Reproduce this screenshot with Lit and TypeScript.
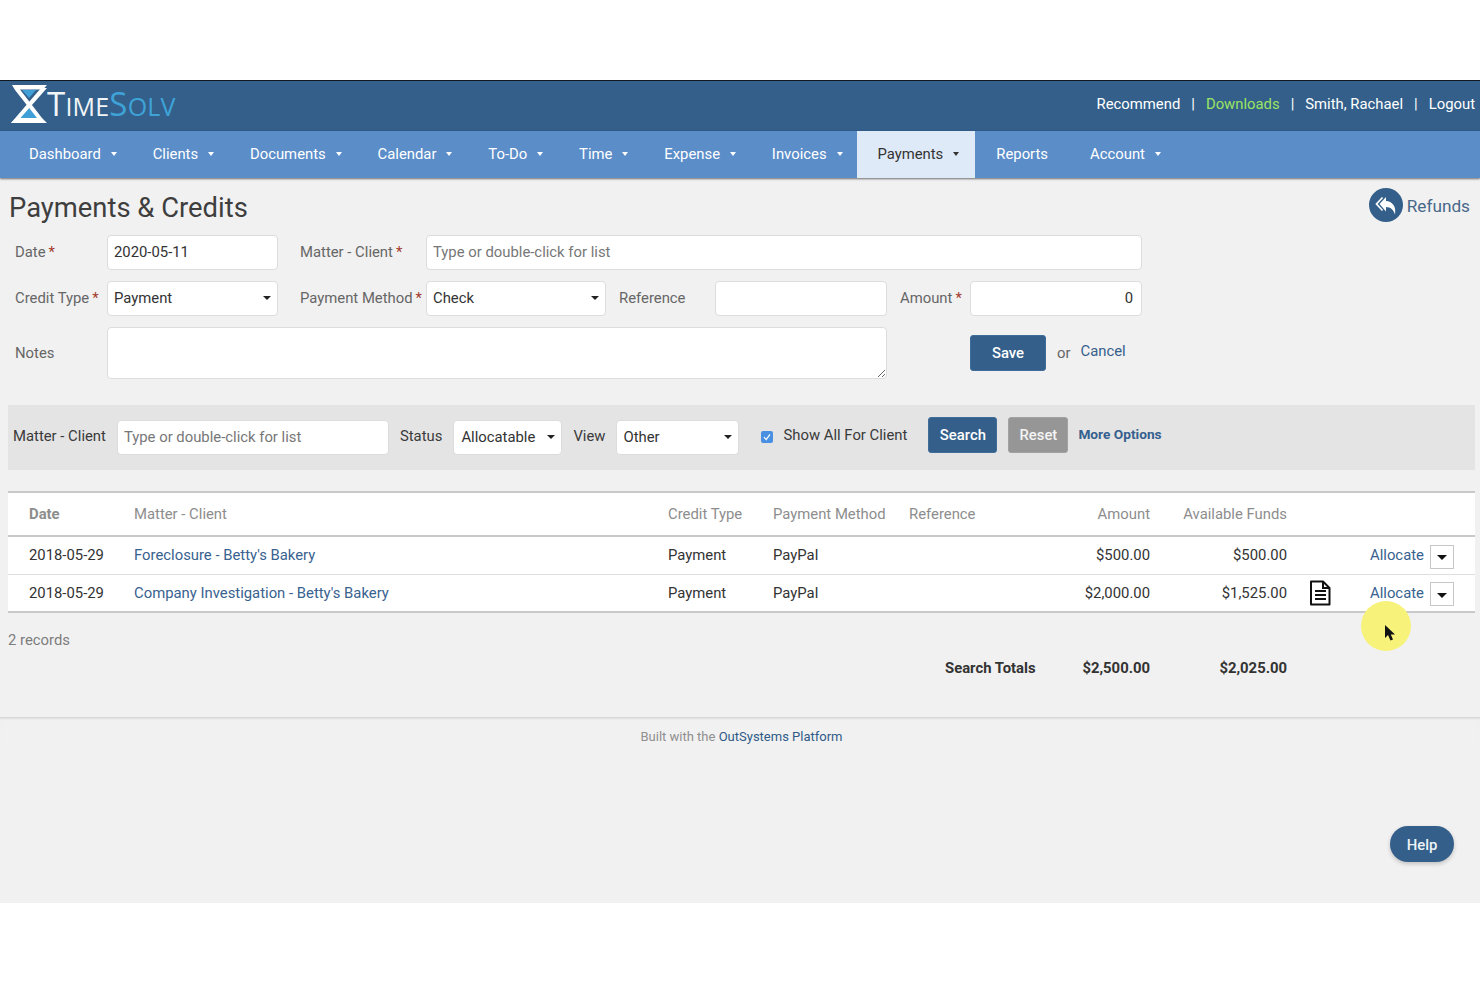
import { LitElement, css, html, svg } from 'lit';
import { customElement } from 'lit/decorators.js';

const NAV = [
  { label: 'Dashboard', caret: true },
  { label: 'Clients', caret: true },
  { label: 'Documents', caret: true },
  { label: 'Calendar', caret: true },
  { label: 'To-Do', caret: true },
  { label: 'Time', caret: true },
  { label: 'Expense', caret: true },
  { label: 'Invoices', caret: true },
  { label: 'Payments', caret: true, active: true },
  { label: 'Reports', caret: false },
  { label: 'Account', caret: true },
];

const ROWS = [
  { date: '2018-05-29', matter: 'Foreclosure - Betty\'s Bakery', type: 'Payment', method: 'PayPal', amount: '$500.00', funds: '$500.00', doc: false },
  { date: '2018-05-29', matter: 'Company Investigation - Betty\'s Bakery', type: 'Payment', method: 'PayPal', amount: '$2,000.00', funds: '$1,525.00', doc: true },
];

const logoMark = svg`
  <svg class="mark" viewBox="0 0 36 38" width="36" height="38">
    <path fill="#3f9fd6" d="M11 5H25L18 13Z" />
    <path fill="#3f9fd6" d="M8 33H28L18 23Z" />
    <path fill="#fff" d="M1 0H36L32 4.5H9L31 33L36 38H0L5 33H26L4 5Z" />
    <path fill="#fff" d="M30 3H36L5 38H0Z" />
  </svg>`;

const docIcon = svg`
  <svg viewBox="0 0 24 26" width="24" height="26" fill="none" stroke="#111" stroke-width="2">
    <path d="M3 1.5H15L21.5 8V24.5H3Z" stroke-linejoin="round" />
    <path d="M15 1.5V8H21.5" />
    <path d="M7 11H18M7 15H18M7 19H18" />
  </svg>`;

const replyIcon = svg`
  <svg viewBox="0 0 34 34" width="34" height="34">
    <circle cx="17" cy="17" r="17" fill="#335f8a" />
    <path fill="#fff" d="M17 9V13C23 13.4 27.5 18 26 26.5C24.5 21.4 21.5 19.2 17 19V23.5L10.5 16Z" />
    <path fill="none" stroke="#fff" stroke-width="1.7" d="M13.5 9.5L7.5 16L13.5 22.5" />
  </svg>`;

@customElement('app-root')
export class AppRoot extends LitElement {
  static styles = css`
    :host {
      display: block;
      background: #fff;
      padding-top: 80px;
      height: 907px;
      font-family: Roboto, 'Liberation Sans', sans-serif;
      font-size: 14.85px;
      color: #333;
    }

    * {
      box-sizing: border-box;
    }

    .page {
      position: relative;
      height: 823px;
      background: #f1f1f1;
      display: flex;
      flex-direction: column;
      overflow: hidden;
    }

    .top {
      height: 51px;
      flex: none;
      background: #335f8a;
      border-top: 1px solid #101820;
      display: flex;
      align-items: center;
      justify-content: space-between;
      padding: 0 5px 4px 11px;
      color: #fff;
    }

    .logo {
      display: flex;
      align-items: center;
      margin-top: -1px;
    }

    .word {
      font-family: 'Open Sans', sans-serif;
      font-weight: 400;
      font-size: 25px;
      color: #f2f5f8;
      line-height: 1;
      white-space: nowrap;
      letter-spacing: 0.2px;
    }

    .word b {
      font-weight: 400;
      font-size: 33px;
    }

    .word .blue {
      color: #3fa3d8;
    }

    .links {
      display: flex;
      gap: 11px;
      align-items: center;
    }

    .links .green {
      color: #9be564;
    }

    .nav {
      height: 47px;
      flex: none;
      background: #5b8dc9;
      box-shadow: 0 1px 2px rgba(0, 0, 0, 0.55);
      display: flex;
      padding: 0 0 2px 8px;
      position: relative;
      z-index: 1;
    }

    .nav a {
      display: flex;
      align-items: center;
      padding: 0 21px;
      color: #fff;
    }

    .nav a.has-caret {
      padding-right: 14.85px;
    }

    .nav a.active {
      background: #dfeaf8;
      color: #333;
      padding-left: 20px;
      padding-right: 16px;
      margin-bottom: -2px;
      padding-bottom: 2px;
    }

    .nav a i {
      width: 0;
      height: 0;
      margin-left: 10px;
      border: 3.5px solid transparent;
      border-top: 4px solid currentColor;
      border-bottom: 0;
    }

    .head {
      height: 57px;
      flex: none;
      display: flex;
      align-items: center;
      justify-content: space-between;
      padding: 0 10px 0 9px;
    }

    h1 {
      margin: 2px 0 0;
      font-size: 27.4px;
      font-weight: 400;
      color: #3e3e3e;
    }

    .refunds {
      display: flex;
      align-items: center;
      gap: 4px;
      font-size: 17.2px;
      color: #48688a;
      margin-top: -3px;
    }

    .refunds svg {
      display: block;
    }

    .refunds span {
      margin-top: 1px;
    }

    .form {
      display: grid;
      grid-template-columns: 92px 171px 22px 126px 180px 13px 96px 172px 13px 70px 172px;
      grid-template-rows: 35px 35px 52px;
      row-gap: 11px;
      margin-left: 15px;
      align-items: center;
      color: #666;
      height: 144px;
      flex: none;
    }

    .form label {
      padding-bottom: 2px;
    }

    .form label.plain {
      padding-bottom: 0;
    }

    .req {
      color: #a33b2c;
      margin-left: 3px;
    }

    .c1 { grid-column: 1; }
    .c2 { grid-column: 2; }
    .c4 { grid-column: 4; }
    .c5 { grid-column: 5; }
    .c7 { grid-column: 7; }
    .c8 { grid-column: 8; }
    .c10 { grid-column: 10; }
    .c11 { grid-column: 11; }
    .matter { grid-column: 5 / 12; }
    .notes { grid-column: 2 / 9; }

    input, textarea, .select {
      height: 35px;
      width: 100%;
      border: 1px solid #dcdcdc;
      border-radius: 4px;
      background: #fff;
      padding: 0 6px 2px;
      font: inherit;
      color: #333;
      display: block;
      outline: none;
    }

    input::placeholder {
      color: #777;
      opacity: 1;
    }

    input.num {
      text-align: right;
      padding-right: 8px;
    }

    textarea {
      height: 52px;
      resize: vertical;
    }

    .select {
      display: flex;
      align-items: center;
      justify-content: space-between;
    }

    .select i {
      width: 0;
      height: 0;
      border: 4px solid transparent;
      border-top: 4px solid #222;
      border-bottom: 0;
    }

    .btn {
      height: 36px;
      border-radius: 3px;
      background: #335f8a;
      color: #fff;
      border: 1px solid #3f6d99;
      display: flex;
      align-items: center;
      justify-content: center;
      font-weight: 500;
    }

    .actions {
      grid-column: 11;
      display: flex;
      align-items: center;
      gap: 11px;
      margin-top: -1px;
    }

    .save {
      width: 76px;
    }

    .actions a {
      color: #36608c;
      margin: -3px 0 0 -1px;
    }

    .filter {
      height: 65px;
      flex: none;
      margin: 26px 5px 0 8px;
      background: #e4e4e4;
      display: flex;
      align-items: center;
      gap: 11px;
      padding-left: 5px;
      color: #3a3a3a;
    }

    .filter input, .filter .select {
      flex: none;
    }

    .filter > span {
      margin-top: -3px;
    }

    .filter input { width: 272px; }
    .filter .status { width: 109px; padding-left: 7px; }
    .filter .view { width: 123px; }

    .up {
      margin-top: -6px;
    }

    .check {
      display: flex;
      align-items: center;
      gap: 10px;
      margin-left: 11px;
      margin-right: 10px;
    }

    .check svg {
      margin-top: 4px;
    }

    .search { width: 69px; }

    .reset {
      width: 60px;
      background: #969696;
      border-color: #a2a2a2;
      color: #f4f4f4;
    }

    .more {
      font-size: 13.7px;
      font-weight: 700;
      color: #35608e;
      margin: -8px 0 0 -1px;
    }

    table {
      flex: none;
      width: 1467px;
      margin: 21px 0 0 8px;
      border-collapse: collapse;
      table-layout: fixed;
      background: #fff;
      border-top: 2px solid #c9c9c9;
      border-bottom: 2px solid #c9c9c9;
    }

    th {
      height: 44px;
      padding: 0;
      text-align: left;
      font-weight: 400;
      color: #8d8d8d;
      border-bottom: 2px solid #c9c9c9;
    }

    th:first-child {
      font-weight: 700;
    }

    td {
      height: 38px;
      padding: 0;
      color: #333;
      border-top: 1px solid #dedede;
    }

    tr:first-child td {
      border-top: 0;
    }

    th:first-child, td:first-child {
      padding-left: 21px;
    }

    .right {
      text-align: right;
    }

    td a {
      color: #38628f;
    }

    .doc svg {
      display: block;
      margin: 1px 0 0 21px;
    }

    .allocate {
      display: flex;
      align-items: center;
      gap: 6px;
    }

    .drop {
      width: 24px;
      height: 24px;
      border: 1px solid #c6c6c6;
      background: #fff;
      display: flex;
      align-items: center;
      justify-content: center;
      margin-top: 3px;
    }

    .drop i {
      width: 0;
      height: 0;
      border: 5px solid transparent;
      border-top: 5px solid #111;
      border-bottom: 0;
      margin-top: 2px;
    }

    .records {
      margin: 18px 0 0 8px;
      color: #7d7d7d;
      flex: none;
    }

    .totals {
      flex: none;
      display: grid;
      grid-template-columns: 945px 90px 115px 137px;
      margin-top: 10px;
      font-weight: 700;
      color: #333;
      white-space: nowrap;
    }

    .totals span:first-child {
      grid-column: 2;
    }

    .footer {
      flex: none;
      margin-top: 40px;
      box-shadow: inset 0 3px 3px -2px rgba(0, 0, 0, 0.16);
      padding: 12px 0 0 3px;
      text-align: center;
      font-size: 13px;
      color: #8f8f8f;
    }

    .footer a {
      color: #2f5a88;
    }

    .help {
      position: absolute;
      left: 1390px;
      top: 746px;
      width: 64px;
      height: 36px;
      border-radius: 18px;
      background: #335f8a;
      color: #eef3f8;
      font-weight: 500;
      padding-top: 2px;
      display: flex;
      align-items: center;
      justify-content: center;
      box-shadow: 0 2px 4px rgba(0, 0, 0, 0.2);
    }

    .spot {
      position: absolute;
      left: 1361px;
      top: 521px;
      width: 50px;
      height: 50px;
      border-radius: 50%;
      background: #f6f27a;
    }

    .spot svg {
      position: absolute;
      left: 23px;
      top: 23px;
    }
  `;

  render() {
    return html`
      <div class="page">
        <header class="top">
          <div class="logo">
            ${logoMark}
            <span class="word"><b>T</b>IME<span class="blue"><b>S</b>OLV</span></span>
          </div>
          <div class="links">
            <span>Recommend</span><span>|</span>
            <span class="green">Downloads</span><span>|</span>
            <span>Smith, Rachael</span><span>|</span>
            <span>Logout</span>
          </div>
        </header>
        <nav class="nav">
          ${NAV.map(
            (n) => html`<a class="${n.caret ? 'has-caret' : ''} ${n.active ? 'active' : ''}">${n.label}${n.caret ? html`<i></i>` : ''}</a>`,
          )}
        </nav>
        <div class="head">
          <h1>Payments &amp; Credits</h1>
          <div class="refunds">${replyIcon}<span>Refunds</span></div>
        </div>
        <div class="form">
          <label class="c1">Date<span class="req">*</span></label>
          <input class="c2" value="2020-05-11" />
          <label class="c4">Matter - Client<span class="req">*</span></label>
          <input class="matter" placeholder="Type or double-click for list" />

          <label class="c1">Credit Type<span class="req">*</span></label>
          <div class="select c2">Payment<i></i></div>
          <label class="c4">Payment Method<span class="req">*</span></label>
          <div class="select c5">Check<i></i></div>
          <label class="c7">Reference</label>
          <input class="c8" />
          <label class="c10">Amount<span class="req">*</span></label>
          <input class="c11 num" value="0" />

          <label class="c1 plain">Notes</label>
          <textarea class="notes"></textarea>
          <div class="actions">
            <div class="btn save">Save</div>
            <span>or</span>
            <a>Cancel</a>
          </div>
        </div>
        <div class="filter">
          <span>Matter - Client</span>
          <input placeholder="Type or double-click for list" />
          <span>Status</span>
          <div class="select status">Allocatable<i></i></div>
          <span>View</span>
          <div class="select view">Other<i></i></div>
          <div class="check up">
            <svg viewBox="0 0 12 12" width="12" height="12">
              <rect width="12" height="12" rx="2" fill="#4a90e2" />
              <path d="M3 6.2L5.2 8.6L9 3.4" fill="none" stroke="#fff" stroke-width="1.2" />
            </svg>
            <span>Show All For Client</span>
          </div>
          <div class="btn search up">Search</div>
          <div class="btn reset up">Reset</div>
          <a class="more">More Options</a>
        </div>
        <table>
          <colgroup>
            <col style="width:126px" /><col style="width:534px" /><col style="width:105px" />
            <col style="width:136px" /><col style="width:91px" /><col style="width:150px" />
            <col style="width:137px" /><col style="width:83px" /><col style="width:105px" />
          </colgroup>
          <thead>
            <tr>
              <th>Date</th>
              <th>Matter - Client</th>
              <th>Credit Type</th>
              <th>Payment Method</th>
              <th>Reference</th>
              <th class="right">Amount</th>
              <th class="right">Available Funds</th>
              <th></th>
              <th></th>
            </tr>
          </thead>
          <tbody>
            ${ROWS.map(
              (r) => html`
                <tr>
                  <td>${r.date}</td>
                  <td><a>${r.matter}</a></td>
                  <td>${r.type}</td>
                  <td>${r.method}</td>
                  <td></td>
                  <td class="right">${r.amount}</td>
                  <td class="right">${r.funds}</td>
                  <td class="doc">${r.doc ? docIcon : ''}</td>
                  <td><div class="allocate"><a>Allocate</a><span class="drop"><i></i></span></div></td>
                </tr>
              `,
            )}
          </tbody>
        </table>
        <div class="records">2 records</div>
        <div class="totals">
          <span>Search Totals</span>
          <span class="right">$2,500.00</span>
          <span class="right">$2,025.00</span>
        </div>
        <div class="footer">Built with the <a>OutSystems Platform</a></div>
        <div class="help">Help</div>
        <div class="spot">
          <svg viewBox="0 0 12 18" width="12" height="18">
            <path fill="#111" d="M1 1V14L4 11L6.5 16.5L9 15.5L6.8 10.5H11Z" />
          </svg>
        </div>
      </div>
    `;
  }
}

declare global {
  interface HTMLElementTagNameMap {
    'app-root': AppRoot;
  }
}
